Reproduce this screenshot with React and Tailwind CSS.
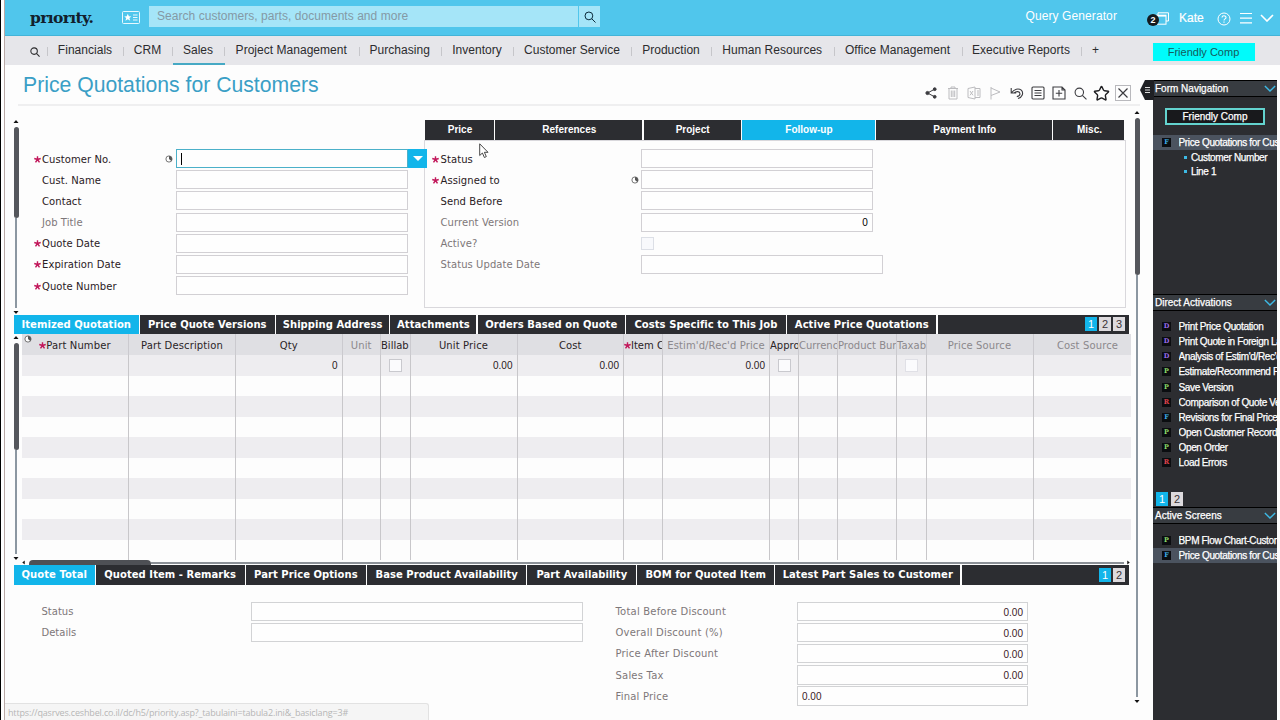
import { LuStar } from "react-icons/lu";

const modules = [
  { name: "Financials", width: "w-[76px]" },
  { name: "CRM", width: "w-[49px]" },
  { name: "Sales", width: "w-[52px]", active: true },
  { name: "Project Management", width: "w-[134.5px]" },
  { name: "Purchasing", width: "w-[82.5px]" },
  { name: "Inventory", width: "w-[72px]" },
  { name: "Customer Service", width: "w-[118px]" },
  { name: "Production", width: "w-[80px]" },
  { name: "Human Resources", width: "w-[122.5px]" },
  { name: "Office Management", width: "w-[128px]" },
  { name: "Executive Reports", width: "w-[119px]" },
  { name: "+", width: "w-[30px]" },
];

const formTabs = [
  { name: "Price", width: "w-[69px]" },
  { name: "References", width: "w-[147px]" },
  { name: "Project", width: "w-[97px]" },
  { name: "Follow-up", width: "w-[133px]", active: true },
  { name: "Payment Info", width: "w-[176px]" },
  { name: "Misc.", width: "w-[71px]" },
];

const customerFields = [
  { label: "Customer No.", required: true, clock: true, focused: true },
  { label: "Cust. Name" },
  { label: "Contact" },
  { label: "Job Title", muted: true },
  { label: "Quote Date", required: true },
  { label: "Expiration Date", required: true },
  { label: "Quote Number", required: true },
];

const followUpFields = [
  { label: "Status", required: true },
  { label: "Assigned to", required: true, clock: true },
  { label: "Send Before" },
  { label: "Current Version", muted: true, value: "0" },
  { label: "Active?", muted: true, checkbox: true },
  { label: "Status Update Date", muted: true, wide: true },
];

const itemTabs = [
  { name: "Itemized Quotation", width: "w-[124.5px]", active: true },
  { name: "Price Quote Versions", width: "w-[135px]" },
  { name: "Shipping Address", width: "w-[113px]" },
  { name: "Attachments", width: "w-[86px]" },
  { name: "Orders Based on Quote", width: "w-[147px]" },
  { name: "Costs Specific to This Job", width: "w-[160px]" },
  { name: "Active Price Quotations", width: "w-[149px]" },
];

const totalTabs = [
  { name: "Quote Total", width: "w-[80.5px]", active: true },
  { name: "Quoted Item - Remarks", width: "w-[148.8px]" },
  { name: "Part Price Options", width: "w-[120px]" },
  { name: "Base Product Availability", width: "w-[159px]" },
  { name: "Part Availability", width: "w-[108.7px]" },
  { name: "BOM for Quoted Item", width: "w-[136.5px]" },
  { name: "Latest Part Sales to Customer", width: "w-[185px]" },
];

const columns = [
  { name: "Part Number", width: "w-[107px]", required: true },
  { name: "Part Description", width: "w-[107px]" },
  { name: "Qty", width: "w-[106.5px]", value: "0" },
  { name: "Unit", width: "w-[38.5px]", muted: true },
  { name: "Billab", width: "w-[29.5px]", clip: true, checkbox: true },
  { name: "Unit Price", width: "w-[107px]", value: "0.00" },
  { name: "Cost", width: "w-[106.5px]", value: "0.00" },
  { name: "Item C", width: "w-[39px]", required: true, clip: true },
  { name: "Estim'd/Rec'd Price", width: "w-[107px]", muted: true, value: "0.00" },
  { name: "Appro", width: "w-[29px]", clip: true, checkbox: true },
  { name: "Currenc", width: "w-[39px]", muted: true, clip: true },
  { name: "Product Bur", width: "w-[59px]", muted: true, clip: true },
  { name: "Taxab", width: "w-[29.5px]", muted: true, clip: true, checkbox: true },
  { name: "Price Source", width: "w-[107px]", muted: true },
  { name: "Cost Source", width: "w-[98px]", muted: true, last: true },
];

const totals = [
  { label: "Total Before Discount", value: "0.00" },
  { label: "Overall Discount (%)", value: "0.00" },
  { label: "Price After Discount", value: "0.00" },
  { label: "Sales Tax", value: "0.00" },
  { label: "Final Price", value: "0.00", left: true },
];

const activations = [
  { type: "D", name: "Print Price Quotation" },
  { type: "D", name: "Print Quote in Foreign La" },
  { type: "D", name: "Analysis of Estim'd/Rec'd" },
  { type: "P", name: "Estimate/Recommend P" },
  { type: "P", name: "Save Version" },
  { type: "R", name: "Comparison of Quote Ve" },
  { type: "F", name: "Revisions for Final Price" },
  { type: "P", name: "Open Customer Record" },
  { type: "P", name: "Open Order" },
  { type: "R", name: "Load Errors" },
];

const badgeColors = {
  D: "text-[#9a6bea]",
  P: "text-[#8fdc6c]",
  R: "text-[#e0444e]",
  F: "text-[#3fb0e8]",
};

function SearchIcon({ className }) {
  return (
    <svg viewBox="0 0 12 12" className={className} fill="none" stroke="currentColor">
      <circle cx="4.9" cy="4.9" r="3.9" />
      <path d="M7.7 7.7 11.5 11.5" />
    </svg>
  );
}

function ClockIcon({ className }) {
  return (
    <svg viewBox="0 0 8 8" className={className}>
      <circle cx="4" cy="4" r="3.1" fill="#fff" stroke="#666" strokeWidth="0.9" />
      <path d="M4 4V1A3 3 0 0 1 6.2 6.1Z" fill="#555" />
    </svg>
  );
}

function Chevron({ className }) {
  return (
    <svg viewBox="0 0 14 8" className={className} fill="none" stroke="currentColor">
      <path d="M1 1 7 7 13 1" />
    </svg>
  );
}

function Asterisk() {
  return (
    <svg viewBox="0 0 8 8" className="h-[7px] w-[7px] shrink-0" stroke="#c2185b" strokeWidth="1.6">
      <path d="M4 0.2V4M4 4 0.3 2.9M4 4 7.7 2.9M4 4 1.7 7.4M4 4 6.3 7.4" />
    </svg>
  );
}

function Header() {
  return (
    <header className="flex h-9 shrink-0 items-start border-b border-[#43b4d8] bg-[#50c6ec] text-white">
      <div className="ml-[25px] h-9 w-[63px] whitespace-nowrap pt-[6px] font-['DejaVu_Serif',serif] text-[15.5px] font-bold leading-[24px] tracking-[-0.65px] text-[#12202c]">
        prıorıty.
      </div>
      <svg viewBox="0 0 18 13" className="ml-[29px] mt-[11px] h-[13px] w-[18px]" fill="none" stroke="#e8f8fe">
        <rect x="0.5" y="0.5" width="17" height="12" rx="1" />
        <path d="M11 4h4.5M11 6.5h4.5M11 9h4.5" />
        <path
          d="M5.8 2.8 6.9 5.3 9.4 5.4 7.4 7 8.2 9.8 5.8 8.2 3.4 9.8 4.2 7 2.2 5.4 4.7 5.3Z"
          fill="#fff"
          stroke="none"
        />
      </svg>
      <div className="ml-[9px] mt-[6px] h-[21px] w-[429px] bg-[#a5e5f8] pl-2 text-[12px] leading-[21px] tracking-[0.04px] text-[#8499a5]">
        Search customers, parts, documents and more
      </div>
      <div className="ml-px mt-[6px] flex h-[21px] w-[21px] items-center justify-center bg-[#a5e5f8]">
        <SearchIcon className="h-3 w-3 text-[#0b2a3a]" />
      </div>
      <div className="ml-auto mt-[7px] text-[12px] leading-[18px] tracking-[0.1px]">Query Generator</div>
      <div className="relative ml-[31px] mt-[12px] h-[14px] w-[22px]">
        <svg viewBox="0 0 22 14" className="h-[14px] w-[22px]" fill="none" stroke="#fff">
          <path d="M10 3V0.8H20.5V9H18" />
          <rect x="8" y="3.2" width="10" height="9" />
          <path d="M8 3.8H18" strokeWidth="1.6" />
        </svg>
        <div className="absolute -left-px top-[2px] h-3 w-3 rounded-full bg-[#141b20] text-center text-[9px] font-bold leading-3">
          2
        </div>
      </div>
      <div className="ml-[9px] mt-[9px] w-[26px] text-[12px] leading-[19px] [-webkit-text-stroke:0.2px_white]">Kate</div>
      <svg viewBox="0 0 14 14" className="ml-[12px] mt-[12px] h-[14px] w-[14px]" fill="none" stroke="#fff">
        <circle cx="7" cy="7" r="6" />
        <path d="M5 5.6C5 3.2 9 3.2 9 5.5 9 7 7 6.8 7 8.6M7 9.6V10.8" strokeWidth="1.1" />
      </svg>
      <svg viewBox="0 0 12 12" className="ml-[9px] mt-[12px] h-3 w-3" stroke="#fff" strokeWidth="1.2">
        <path d="M0 1.5H12M0 6.2H12M0 10.9H12" />
      </svg>
      <Chevron className="ml-[8px] mr-[6px] mt-[14px] h-[8px] w-[14px] stroke-[1.6]" />
    </header>
  );
}

function ModuleBar() {
  return (
    <nav className="flex h-[29px] shrink-0 bg-[#e6e6ea] text-[12px] text-[#2c2c2e]">
      <div className="w-[42px] pl-[25px] pt-[11px]">
        <SearchIcon className="h-[10px] w-[10px] stroke-[1.3]" />
      </div>
      {modules.map((item) => (
        <div key={item.name} className={`relative flex justify-center ${item.width}`}>
          <span className="absolute left-0 top-[11px] h-[9px] w-px bg-[#c6c6ca]" />
          <span className="whitespace-nowrap leading-[29px] tracking-[0.03px]">{item.name}</span>
          {item.active && <span className="absolute bottom-0 left-px h-[2px] w-full bg-[#46a9c4]" />}
        </div>
      ))}
      <div className="ml-[42px] mt-[7px] h-[18px] w-[102px] bg-[#00fbfb] text-center text-[11px] leading-[18px] text-[#155a5c]">
        Friendly Comp
      </div>
    </nav>
  );
}

function Toolbar() {
  const slot = "flex w-[21.35px] items-center justify-center";
  return (
    <div className="mt-[18px] flex h-5 text-[#3c3c40]">
      <div className={slot}>
        <svg viewBox="0 0 12 12" className="h-3 w-3" fill="currentColor" stroke="currentColor">
          <path d="M10 2 2.5 6 10 10" fill="none" />
          <circle cx="2.5" cy="6" r="1.6" />
          <circle cx="9.7" cy="2.2" r="1.4" />
          <circle cx="9.7" cy="9.8" r="1.4" />
        </svg>
      </div>
      <div className={slot}>
        <svg viewBox="0 0 12 14" className="h-[14px] w-3 text-[#bcbcbf]" fill="none" stroke="currentColor">
          <path d="M1 2.5H11M4 2.5V1H8V2.5M2 2.5V13H10V2.5M4.3 4.5V11M6 4.5V11M7.7 4.5V11" />
        </svg>
      </div>
      <div className={slot}>
        <svg viewBox="0 0 14 14" className="h-[14px] w-[14px] text-[#bcbcbf]" fill="none" stroke="currentColor">
          <path d="M1 2.5 8 1V13L1 11.5ZM8 2.5H13V11.5H8M10 5H12M10 7H12M10 9H12M3 5 6 9.3M6 5 3 9.3" />
        </svg>
      </div>
      <div className={slot}>
        <svg viewBox="0 0 12 14" className="h-[14px] w-3 text-[#bcbcbf]" fill="none" stroke="currentColor">
          <path d="M2 1V13.5M2 2 11 6 2 9.5" />
        </svg>
      </div>
      <div className={slot}>
        <svg viewBox="0 0 14 14" className="h-[14px] w-[14px]" fill="none" stroke="currentColor" strokeWidth="1.1">
          <path d="M1.2 2V7H6.2M1.5 6.8C4 3 8.5 1.8 11.3 4.2 14 7 12.2 11.2 8 12.6M4 7C6.5 4.8 9.8 5.3 10 7.8 10 9.5 8.5 10.3 6.8 10.6" />
        </svg>
      </div>
      <div className={slot}>
        <svg viewBox="0 0 14 14" className="h-[14px] w-[14px]" fill="none" stroke="currentColor" strokeWidth="1.1">
          <rect x="1" y="1" width="12" height="12" rx="1" />
          <path d="M3.5 4.5H10.5M3.5 7H10.5M3.5 9.5H10.5" />
        </svg>
      </div>
      <div className={slot}>
        <svg viewBox="0 0 14 14" className="h-[14px] w-[14px]" fill="none" stroke="currentColor" strokeWidth="1.1">
          <path d="M1 1H10L13 4V13H1ZM10 1V4H13M7 4V10.5M3.8 7.2H10.2" />
        </svg>
      </div>
      <div className={slot}>
        <SearchIcon className="h-[13px] w-[13px]" />
      </div>
      <div className={slot}>
        <LuStar className="h-[17px] w-[17px] text-[#1f1f22]" />
      </div>
      <div className={slot}>
        <svg viewBox="0 0 16 16" className="h-4 w-4" fill="none" stroke="currentColor">
          <rect x="0.5" y="0.5" width="15" height="15" stroke="#b9b9bd" />
          <path d="M3.5 3.5 12.5 12.5M12.5 3.5 3.5 12.5" strokeWidth="1.2" />
        </svg>
      </div>
    </div>
  );
}

// Thin vertical scrollbar: arrow, thumb, remaining track, arrow
function Scrollbar({ thumb, className }) {
  return (
    <div className={`flex w-[6px] flex-col items-center ${className}`}>
      <svg viewBox="0 0 6 3" className="mb-[4px] h-[3px] w-[6px] shrink-0">
        <path d="M0.5 3 3 0 5.5 3Z" fill="#111" />
      </svg>
      <div className={`w-[5px] shrink-0 rounded-full bg-[#55575c] ${thumb}`} />
      <div className="w-[2px] flex-1 bg-[#8c97a1]" />
      <svg viewBox="0 0 6 3" className="mt-[3px] h-[3px] w-[6px] shrink-0">
        <path d="M0.5 0 3 3 5.5 0Z" fill="#111" />
      </svg>
    </div>
  );
}

function Label({ field, className }) {
  return (
    <div className={`flex h-[20px] items-center ${className}`}>
      <span className="flex w-[8.5px] shrink-0">{field.required && <Asterisk />}</span>
      <span
        className={`whitespace-nowrap font-['DejaVu_Sans',sans-serif] text-[10px] ${
          field.muted ? "text-[#7d7779]" : "text-[#2a2024]"
        }`}
      >
        {field.label}
      </span>
    </div>
  );
}

function CustomerForm() {
  return (
    <div className="ml-[14.5px] grid w-[385.5px] auto-rows-[21.2px] pt-[44px] tracking-[0.07px]">
      {customerFields.map((field) => (
        <div key={field.label} className="flex">
          <Label field={field} className="w-[131.5px]" />
          <div className="flex w-[11px] pt-[6px]">
            {field.clock && <ClockIcon className="h-[8px] w-[8px]" />}
          </div>
          <div
            className={`relative h-[19px] w-[232px] border bg-[#fefefe] ${
              field.focused ? "border-[#4bb0c9]" : "border-[#d2d0d4]"
            }`}
          >
            {field.focused && (
              <>
                <span className="ml-[4px] mt-[3px] block h-3 w-px bg-black" />
                <button className="absolute -right-[20px] -top-px flex h-[19px] w-[19px] items-center justify-center bg-[#12b5ea]">
                  <svg viewBox="0 0 10 5" className="h-[5px] w-[10px]">
                    <path d="M0 0H10L5 5Z" fill="#fff" />
                  </svg>
                </button>
              </>
            )}
          </div>
        </div>
      ))}
    </div>
  );
}

function FollowUpPanel() {
  return (
    <div className="mt-[15px] h-[189px] w-[702px]">
      <div className="ml-px flex h-5 gap-[1.3px]">
        {formTabs.map((tab) => (
          <div
            key={tab.name}
            className={`shrink-0 pl-px text-center text-[10px] font-bold leading-[19px] text-white ${tab.width} ${
              tab.active ? "bg-[#12b5ea]" : "bg-[#2c2d31]"
            }`}
          >
            {tab.name}
          </div>
        ))}
      </div>
      <div className="h-[168px] border border-[#d9d8dc] pl-[7px] pt-[8px] tracking-[0.08px]">
        {followUpFields.map((field) => (
          <div key={field.label} className="flex h-[21.2px]">
            <Label field={field} className="w-[199px]" />
            <div className="flex w-[10px] pt-[6px]">
              {field.clock && <ClockIcon className="h-[8px] w-[8px]" />}
            </div>
            {field.checkbox ? (
              <div className="mt-[3px] h-[13px] w-[13px] border border-[#dcdfe6] bg-[#f8f9fc]" />
            ) : (
              <div
                className={`h-[19px] border border-[#d2d0d4] bg-[#fefefe] pr-[4px] text-right text-[10px] leading-[18px] ${
                  field.wide ? "w-[242px]" : "w-[232px]"
                }`}
              >
                {field.value}
              </div>
            )}
          </div>
        ))}
      </div>
    </div>
  );
}

function Pager({ count, className }) {
  return (
    <div className={`flex items-center ${className}`}>
      {Array.from({ length: count }, (_, i) => (
        <span
          key={i}
          className={`h-[14px] w-[12px] text-center text-[11px] leading-[14px] ${
            i === 0 ? "bg-[#12b5ea] text-white" : "bg-[#dddadd] text-[#3a3236]"
          }`}
        >
          {i + 1}
        </span>
      ))}
    </div>
  );
}

function SubTabs({ tabs, pages }) {
  return (
    <div className="ml-[9px] flex h-[19.5px] w-[1115px] shrink-0 gap-[1.3px] font-['DejaVu_Sans',sans-serif] text-white">
      {tabs.map((tab) => (
        <div
          key={tab.name}
          className={`shrink-0 whitespace-nowrap text-center text-[10px] font-bold leading-[19px] tracking-[0.05px] ${tab.width} ${
            tab.active ? "bg-[#12b5ea]" : "bg-[#2c2d31]"
          }`}
        >
          {tab.name}
        </div>
      ))}
      <div className="flex flex-1 justify-end bg-[#2c2d31] pr-[4px] font-['Liberation_Sans',sans-serif]">
        <Pager count={pages} className="gap-[2px]" />
      </div>
    </div>
  );
}

function ItemTable() {
  return (
    <div className="ml-[3px] w-[1109px] overflow-hidden">
      <div className="relative flex h-[21px] bg-[#dfdfe3]">
        <ClockIcon className="absolute left-[2px] top-px h-[8px] w-[8px]" />
        {columns.map((col) => (
          <div
            key={col.name}
            className={`flex shrink-0 items-center overflow-hidden whitespace-nowrap pt-px font-['DejaVu_Sans',sans-serif] text-[10px] ${col.width} ${
              col.clip ? "justify-start" : "justify-center tracking-[0.12px]"
            } ${col.last ? "pl-[10px]" : "border-r border-[#cbcacf]"} ${
              col.muted ? "text-[#8b888c]" : "text-[#2a2426]"
            }`}
          >
            {col.required && <Asterisk />}
            {col.name}
          </div>
        ))}
      </div>
      {Array.from({ length: 10 }, (_, row) => (
        <div key={row} className="flex h-[20.5px] odd:bg-[#fdfdfd] even:bg-[#eeedf0]">
          {columns.map((col) => (
            <div
              key={col.name}
              className={`flex shrink-0 items-center text-[10px] text-[#2a1a22] ${col.width} ${
                col.checkbox ? "justify-center" : "justify-end pr-[4px]"
              } ${col.last ? "" : "border-r border-[#c8c7ca]"}`}
            >
              {row === 0 && col.value}
              {row === 0 && col.checkbox && (
                <span
                  className={`h-[13px] w-[13px] border bg-[#fbfbfd] ${
                    col.muted ? "border-[#e0e0e6]" : "border-[#c9c9ce]"
                  }`}
                />
              )}
            </div>
          ))}
        </div>
      ))}
    </div>
  );
}

function TotalsForm() {
  const input =
    "h-[19.5px] border border-[#d2d3d5] bg-[#fefefe] px-[4px] text-[10px] leading-[19px] tracking-normal text-[#3a1a26]";
  return (
    <div className="flex pl-[28px] pt-[17px]">
      <div>
        {["Status", "Details"].map((label) => (
          <div key={label} className="flex h-[21.2px]">
            <Label field={{ label, muted: true }} className="w-[218px]" />
            <div className={`w-[332px] ${input}`} />
          </div>
        ))}
      </div>
      <div className="ml-[24px] tracking-[0.2px]">
        {totals.map((field) => (
          <div key={field.label} className="flex h-[21.2px]">
            <Label field={{ ...field, muted: true }} className="w-[190px]" />
            <div className={`w-[231px] ${input} ${field.left ? "text-left" : "text-right"}`}>{field.value}</div>
          </div>
        ))}
      </div>
    </div>
  );
}

function PanelTitle({ children }) {
  return (
    <div className="flex h-[17px] shrink-0 items-center justify-between border-y border-black bg-[#383c41] pl-[2px] text-[10px]">
      {children}
      <Chevron className="mr-px h-[7px] w-[12px] stroke-[1.6] text-[#3db9e4] [-webkit-text-stroke:0]" />
    </div>
  );
}

function ScreenItem({ type, name, active }) {
  return (
    <div className={`flex h-[15.15px] items-center tracking-[-0.35px] ${active ? "bg-[#4b535f]" : ""}`}>
      <span
        className={`ml-[9px] mr-[7.5px] h-[9px] w-[9px] shrink-0 bg-[#0b0d10] text-center font-['DejaVu_Serif',serif] text-[6.5px] font-bold leading-[9px] tracking-normal [-webkit-text-stroke:0] ${badgeColors[type]}`}
      >
        {type}
      </span>
      <span className="w-[100px] overflow-hidden whitespace-nowrap">{name}</span>
    </div>
  );
}

function Sidebar() {
  return (
    <aside className="relative mt-[15px] flex w-[124px] shrink-0 flex-col bg-[#2c2d31] text-[10px] text-white [-webkit-text-stroke:0.25px_white]">
      <svg viewBox="0 0 14 20" className="absolute -left-[13px] top-0 h-5 w-[14px]">
        <path d="M5 0H14V20H5L0 10Z" fill="#1f2024" />
        <path d="M5 7.5H10M5 10H10M5 12.5H10" stroke="#ddd" />
      </svg>
      <PanelTitle>Form Navigation</PanelTitle>
      <div className="mx-3 mt-[11px] h-[17px] w-[100px] border-2 border-[#63d3cf] bg-[#18191c] text-center leading-[13px]">
        Friendly Comp
      </div>
      <div className="mt-[10px] h-[159px]">
        <ScreenItem type="F" name="Price Quotations for Cus" active />
        {["Customer Number", "Line 1"].map((name) => (
          <div key={name} className="flex h-[14.5px] items-center pl-[31px] tracking-[-0.36px]">
            <span className="mr-[4px] h-[3px] w-[3px] bg-[#3db9e4]" />
            {name}
          </div>
        ))}
      </div>
      <PanelTitle>Direct Activations</PanelTitle>
      <div className="h-[180px] pt-[8px]">
        {activations.map((item) => (
          <ScreenItem key={item.name} {...item} />
        ))}
      </div>
      <Pager count={2} className="h-[15.5px] gap-[3px] pl-[3px] [-webkit-text-stroke:0]" />
      <PanelTitle>Active Screens</PanelTitle>
      <div className="pt-[9px]">
        <ScreenItem type="P" name="BPM Flow Chart-Custom" />
        <ScreenItem type="F" name="Price Quotations for Cus" active />
      </div>
    </aside>
  );
}

function App() {
  return (
    <div className="relative flex h-[720px] w-[1280px] overflow-hidden bg-[#fdfdfd] font-['Liberation_Sans',Arial,sans-serif]">
      <div className="w-[5px] shrink-0 border-l border-r border-l-black border-r-[#b9a9a6] bg-white" />
      <div className="flex w-[1275px] flex-col">
        <Header />
        <ModuleBar />
        <div className="flex flex-1">
          <main className="flex w-[1148px] shrink-0 flex-col">
            <div className="-mb-px ml-[13px] flex h-[41px] w-[1122px] shrink-0 justify-between border-b-2 border-[#efeff0]">
              <h1 className="pl-[5px] text-[21.2px] leading-[39px] text-[#3a9fc6]">Price Quotations for Customers</h1>
              <div className="mr-[6px]">
                <Toolbar />
              </div>
            </div>
            <div className="flex flex-1">
              <div className="flex w-[1127px] flex-col">
                <div className="flex h-[209.5px] shrink-0">
                  <Scrollbar className="ml-[8px] mt-[15px] h-[194px]" thumb="h-[91px]" />
                  <CustomerForm />
                  <div className="ml-[5px]">
                    <FollowUpPanel />
                  </div>
                </div>
                <SubTabs tabs={itemTabs} pages={3} />
                <div className="flex h-[226px] shrink-0">
                  <Scrollbar className="ml-[8px] mt-[2px] h-[224px]" thumb="h-[107px]" />
                  <ItemTable />
                </div>
                <div className="ml-[17px] flex h-[5px] w-[1108px] shrink-0 items-center">
                  <svg viewBox="0 0 3 6" className="mr-[4px] h-[5px] w-[3px]">
                    <path d="M3 0.5 0 3 3 5.5Z" fill="#111" />
                  </svg>
                  <div className="h-[5px] w-[122px] rounded-t bg-[#4e5055]" />
                  <div className="mr-[3px] h-[2px] flex-1 bg-[#8c9197]" />
                  <svg viewBox="0 0 3 6" className="h-[5px] w-[3px]">
                    <path d="M0 0.5 3 3 0 5.5Z" fill="#111" />
                  </svg>
                </div>
                <SubTabs tabs={totalTabs} pages={2} />
                <TotalsForm />
              </div>
              <Scrollbar className="ml-[2px] mt-[6px] h-[592px]" thumb="h-[157px]" />
            </div>
          </main>
          <Sidebar />
        </div>
      </div>
      {/* Browser status bubble */}
      <div className="absolute bottom-0 left-[5px] h-[17px] w-[424px] whitespace-nowrap rounded-tr-[3px] border-r border-t border-[#e2e2e2] bg-[#f5f5f5] pl-[3px] font-['Open_Sans',sans-serif] text-[9px] leading-[17px] tracking-[-0.16px] text-[#b5b5b5]">
        https://qasrves.ceshbel.co.il/dc/h5/priority.asp?_tabulaini=tabula2.ini&_basiclang=3#
      </div>
      <svg viewBox="0 0 10 16" className="absolute left-[479px] top-[143px] h-4 w-[10px]">
        <path d="M0.7 0.8V12.5L3.4 10 5.4 14.5 7.3 13.6 5.4 9.3H9Z" fill="#fff" stroke="#333" strokeWidth="0.9" />
      </svg>
    </div>
  );
}

export default App;
